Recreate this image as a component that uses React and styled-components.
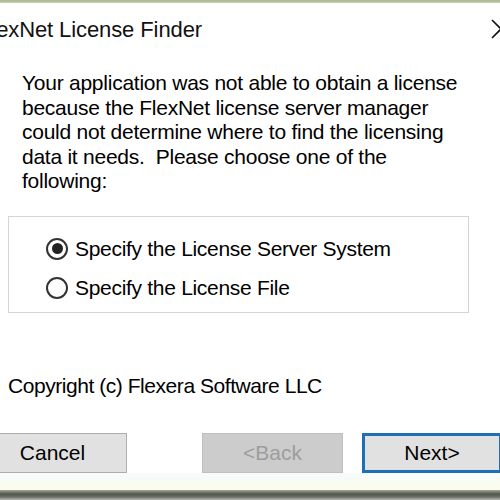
import React from "react";
import styled, { createGlobalStyle } from "styled-components";

const Global = createGlobalStyle`
  html, body { margin: 0; padding: 0; background: #ffffff; overflow: hidden; }
  body { width: 500px; height: 500px; }
`;

const Frame = styled.div`
  width: 500px;
  height: 500px;
  overflow: hidden;
  background: #ffffff;
  display: flex;
  flex-direction: column;
  font-family: "Liberation Sans", Arial, sans-serif;
  color: #000;
`;

const TopEdge = styled.div`
  height: 3px;
  background: linear-gradient(#aab591, #c9d2b3);
  flex: none;
`;

const Window = styled.div`
  margin-left: -22px;
  width: 560px;
  display: flex;
  flex-direction: column;
  flex: 1;
`;

const TitleBar = styled.div`
  height: 56px;
  display: flex;
  align-items: center;
  justify-content: space-between;
`;

const Title = styled.div`
  font-family: "Liberation Sans", Arial, sans-serif;
  font-size: 22px;
  letter-spacing: -0.1px;
  color: #111;
  margin-top: -2px;
`;

const Close = styled.svg`
  width: 22px;
  height: 22px;
  margin-right: 26px;
  margin-top: -4px;
`;

const Message = styled.p`
  margin: 12px 0 0 44px;
  width: 480px;
  font-size: 21px;
  line-height: 24.6px;
  letter-spacing: -0.25px;
  white-space: nowrap;
`;

const Group = styled.div`
  margin: 22px 0 0 30px;
  width: 461px;
  height: 97px;
  border: 1px solid #d4d4d4;
  display: flex;
  flex-direction: column;
  justify-content: center;
  gap: 15px;
  padding: 8px 0 0 37px;
  box-sizing: border-box;
`;

const RadioRow = styled.label`
  display: flex;
  align-items: center;
  gap: 7px;
  font-size: 21px;
  height: 24px;
  letter-spacing: -0.3px;
`;

const RadioCircle = styled.span`
  width: 22px;
  height: 22px;
  border-radius: 50%;
  border: 2px solid #333;
  box-sizing: border-box;
  display: flex;
  align-items: center;
  justify-content: center;
  background: #fff;
  &::after {
    content: "";
    width: 11px;
    height: 11px;
    border-radius: 50%;
    background: ${(p) => (p.$checked ? "#222" : "transparent")};
  }
`;

const Copyright = styled.div`
  margin: 61px 0 0 30px;
  font-size: 21px;
  letter-spacing: -0.45px;
  line-height: 24px;
`;

const ButtonRow = styled.div`
  display: flex;
  margin-top: 35px;
`;

const Button = styled.div`
  box-sizing: border-box;
  height: 40px;
  width: ${(p) => p.$w}px;
  margin-left: ${(p) => p.$ml}px;
  display: flex;
  align-items: center;
  justify-content: center;
  font-size: 21px;
  background: ${(p) => (p.$disabled ? "#cccccc" : "#e1e1e1")};
  color: ${(p) => (p.$disabled ? "#9d9d9d" : "#000")};
  border: ${(p) =>
    p.$default ? "3px solid #1f6fb5" : p.$disabled ? "1px solid #bfbfbf" : "1px solid #adadad"};
`;

const Footer = styled.div`
  height: 17px;
  background: linear-gradient(#f6fbfd, #fbfde9);
`;

const BottomEdge = styled.div`
  height: 10px;
  background: linear-gradient(#a5a99c, #50554b 40%, #6b6f66 70%, #b9bcb4);
`;

export default function App() {
  return (
    <>
      <Global />
      <Frame>
        <TopEdge />
        <Window>
          <TitleBar>
            <Title>FlexNet License Finder</Title>
            <Close viewBox="0 0 22 22">
              <path d="M2 2 L20 20 M20 2 L2 20" stroke="#111" strokeWidth="1.6" fill="none" />
            </Close>
          </TitleBar>
          <Message>
            Your application was not able to obtain a license
            <br />
            because the FlexNet license server manager
            <br />
            could not determine where to find the licensing
            <br />
            data it needs.&nbsp; Please choose one of the
            <br />
            following:
          </Message>
          <Group>
            <RadioRow>
              <RadioCircle $checked />
              Specify the License Server System
            </RadioRow>
            <RadioRow>
              <RadioCircle />
              Specify the License File
            </RadioRow>
          </Group>
          <Copyright>Copyright (c) Flexera Software LLC</Copyright>
          <ButtonRow>
            <Button $w={149} $ml={0}>Cancel</Button>
            <Button $w={141} $ml={75} $disabled>&lt;Back</Button>
            <Button $w={140} $ml={19} $default>Next&gt;</Button>
          </ButtonRow>
          <Footer />
          <BottomEdge />
        </Window>
      </Frame>
    </>
  );
}
